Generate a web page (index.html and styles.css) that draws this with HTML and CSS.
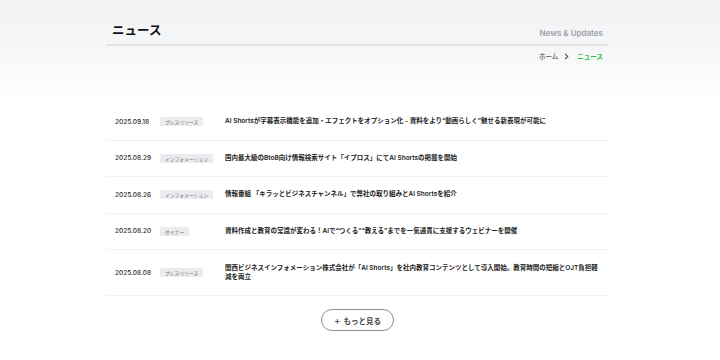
FILE: index.html
```html
<!DOCTYPE html>
<html lang="ja">
<head>
<meta charset="utf-8">
<title>ニュース</title>
<link rel="stylesheet" href="styles.css">
</head>
<body>
<header class="hero">
  <div class="wrap">
    <div class="hero-top">
      <h1 class="hero-title">ニュース</h1>
      <span class="hero-sub">News &amp; Updates</span>
    </div>
    <nav class="crumbs">
      <span class="crumb">ホーム</span>
      <svg class="crumb-sep" viewBox="0 0 6 8" width="5" height="7"><path d="M1.5 1 L4.5 4 L1.5 7" fill="none" stroke="#555" stroke-width="1.3"/></svg>
      <span class="crumb current">ニュース</span>
    </nav>
  </div>
</header>
<main class="wrap">
  <ul class="news">
    <li class="row"><span class="date">2025.09.18</span><span class="tagcell"><span class="tag">プレスリリース</span></span><span class="title">AI Shortsが字幕表示機能を追加・エフェクトをオプション化 - 資料をより“動画らしく”魅せる新表現が可能に</span></li>
    <li class="row"><span class="date">2025.08.29</span><span class="tagcell"><span class="tag">インフォメーション</span></span><span class="title">国内最大級のBtoB向け情報検索サイト「イプロス」にてAI Shortsの掲載を開始</span></li>
    <li class="row"><span class="date">2025.08.26</span><span class="tagcell"><span class="tag">インフォメーション</span></span><span class="title">情報番組 「キラッとビジネスチャンネル」で弊社の取り組みとAI Shortsを紹介</span></li>
    <li class="row"><span class="date">2025.08.20</span><span class="tagcell"><span class="tag">セミナー</span></span><span class="title">資料作成と教育の常識が変わる！AIで“つくる”“教える”までを一気通貫に支援するウェビナーを開催</span></li>
    <li class="row tall"><span class="date">2025.08.08</span><span class="tagcell"><span class="tag">プレスリリース</span></span><span class="title">関西ビジネスインフォメーション株式会社が「AI Shorts」を社内教育コンテンツとして導入開始。教育時間の短縮とOJT負担軽減を両立</span></li>
  </ul>
  <div class="more-wrap">
    <button class="more"><span class="plus">+</span>もっと見る</button>
  </div>
</main>
</body>
</html>
```
FILE: styles.css
```css
* { box-sizing: border-box; }
html, body { margin: 0; padding: 0; background: #fff; }
body {
  font-family: Inter, "Noto Sans CJK JP", sans-serif;
  color: #1f2937;
  width: 720px;
  height: 360px;
  overflow: hidden;
}
.wrap { width: 503px; margin-left: 106px; }
.hero {
  background: linear-gradient(to bottom, #f1f2f4 0%, #f6f7f8 55%, #ffffff 100%);
  height: 100px;
  padding-top: 22px;
}
.hero-top {
  display: flex;
  justify-content: space-between;
  align-items: center;
  padding: 0 6px 1px 6px;
  height: 24px;
  border-bottom: 2px solid #e2e4e8;
}
.hero-title {
  margin: 0;
  font-size: 12.5px;
  font-weight: 700;
  color: #111;
  letter-spacing: 0;
  line-height: 1;
  margin-top: -3px;
}
.hero-sub {
  font-size: 8px;
  font-weight: 600;
  color: #9ca0a8;
  margin-top: 1px;
}
.crumbs {
  display: flex;
  justify-content: flex-end;
  align-items: center;
  gap: 6px;
  padding-right: 6px;
  margin-top: 5px;
  font-size: 6.5px;
  font-weight: 600;
}
.crumb { color: #777; }
.crumb.current { color: #2fbe3a; margin-left: 2px; }
.crumb-sep { display: block; }

.news {
  list-style: none;
  margin: 4px 0 0 0;
  padding: 0;
}
.row {
  display: grid;
  grid-template-columns: 45px 65px 1fr;
  align-items: center;
  height: 36.5px;
  border-bottom: 1px solid #f1f2f4;
  padding-left: 9px;
}
.row.tall { height: 46px; }
.date {
  font-size: 6.5px;
  font-weight: 500;
  color: #2b2b2b;
  white-space: nowrap;
}
.tagcell { display: flex; }
.tag {
  height: 9px;
  display: flex;
  align-items: center;
  padding: 0 5px;
  background: #ebecef;
  border-radius: 1.5px;
  font-size: 4.8px;
  color: #666;
  white-space: nowrap;
}
.title {
  font-size: 6.5px;
  font-weight: 600;
  color: #222;
  line-height: 9px;
  padding-right: 10px;
}
.more-wrap {
  display: flex;
  justify-content: center;
  margin-top: 13px;
}
.more {
  width: 73px;
  height: 22px;
  border: 1px solid #8b8f97;
  border-radius: 11px;
  background: #fff;
  font-family: Inter, "Noto Sans CJK JP", sans-serif;
  font-size: 7.5px;
  font-weight: 600;
  color: #444;
  display: flex;
  align-items: center;
  justify-content: center;
  gap: 3px;
  padding: 0;
}
.plus { font-size: 10px; font-weight: 400; line-height: 1; margin-top: -1px; }
```
